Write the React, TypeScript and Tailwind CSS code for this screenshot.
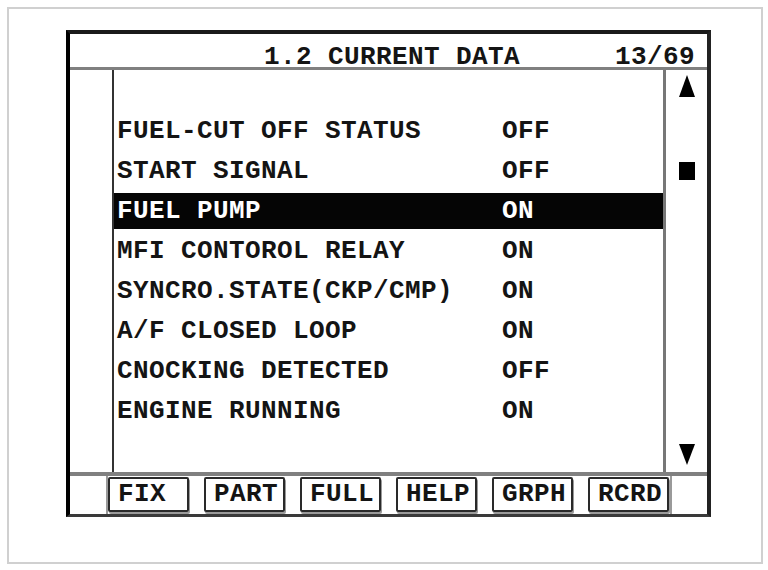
import React from 'react';

const rows: { label: string; value: string; selected?: boolean }[] = [
  { label: 'FUEL-CUT OFF STATUS', value: 'OFF' },
  { label: 'START SIGNAL', value: 'OFF' },
  { label: 'FUEL PUMP', value: 'ON', selected: true },
  { label: 'MFI CONTOROL RELAY', value: 'ON' },
  { label: 'SYNCRO.STATE(CKP/CMP)', value: 'ON' },
  { label: 'A/F CLOSED LOOP', value: 'ON' },
  { label: 'CNOCKING DETECTED', value: 'OFF' },
  { label: 'ENGINE RUNNING', value: 'ON' },
];

const buttons = ['FIX', 'PART', 'FULL', 'HELP', 'GRPH', 'RCRD'];

const mono = "font-['Liberation_Mono','DejaVu_Sans_Mono',monospace] font-bold text-[26px] leading-[25px] tracking-[0.4px]";

export default function App() {
  return (
    <div className="w-[768px] h-[570px] bg-white pt-[7px] pl-[7px]">
      <div className="w-[756px] h-[557px] border-2 border-[#d0d0d0]">
        <div className={`mt-[21px] ml-[57px] w-[645px] border-l-4 border-l-black border-t-4 border-t-[#1a1a1a] border-r-4 border-r-[#222] border-b-[3px] border-b-[#3a3a3a] bg-white text-[#141414] ${mono}`}>
          {/* header */}
          <div className="h-[36px] flex justify-between pt-[11px] pl-[194px] pr-[12px] border-b-[3px] border-[#808080] whitespace-pre">
            <span>1.2 CURRENT DATA</span>
            <span>13/69</span>
          </div>

          {/* data area */}
          <div className="h-[402px] flex">
            <div className="w-[44px] border-r-2 border-[#333]" />
            <div className="flex-1 flex flex-col gap-[4px] pt-[43px]">
              {rows.map((r) => (
                <div
                  key={r.label}
                  className={`h-[36px] flex items-center pl-[3px] whitespace-pre ${r.selected ? 'bg-[#050505] text-white' : ''}`}
                >
                  <span className="w-[385px] shrink-0">{r.label}</span>
                  <span>{r.value}</span>
                </div>
              ))}
            </div>
            <div className="w-[44px] border-l-[3px] border-[#777] flex flex-col items-center pt-[5px] pb-[7px]">
              <svg width="18" height="22" viewBox="0 0 18 22">
                <polygon points="9,0 17,22 1,22" fill="#000" />
              </svg>
              <div className="mt-[65px] w-[16px] h-[18px] bg-black" />
              <div className="flex-1" />
              <svg width="18" height="21" viewBox="0 0 18 21">
                <polygon points="1,0 17,0 9,21" fill="#000" />
              </svg>
            </div>
          </div>

          {/* function keys */}
          <div className="h-[38px] flex border-t-4 border-[#808080] box-content">
            <div className="w-[38px] border-r-2 border-[#9a9a9a]" />
            <div className="flex gap-[15px]">
              {buttons.map((b) => (
                <div
                  key={b}
                  className="w-[81px] h-[35px] mt-[1px] border-2 border-[#2a2a2a] rounded-[2px] shadow-[1px_2px_0_#9a9a9a] flex items-center pl-[8px]"
                >
                  {b}
                </div>
              ))}
            </div>
            <div className="flex-1 ml-[1px] border-l-2 border-[#9a9a9a]" />
          </div>
        </div>
      </div>
    </div>
  );
}
